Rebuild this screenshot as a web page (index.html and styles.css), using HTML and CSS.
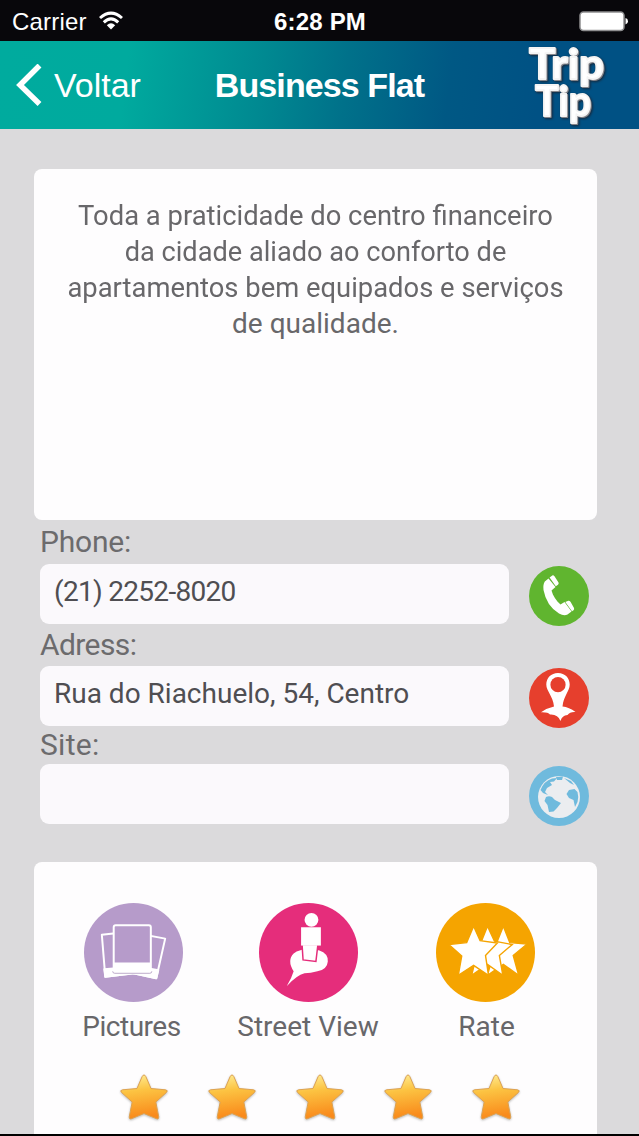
FILE: index.html
```html
<!DOCTYPE html>
<html lang="pt-BR">
<head>
<meta charset="utf-8">
<title>Business Flat</title>
<link rel="stylesheet" href="styles.css">
</head>
<body>
<svg class="defs" width="0" height="0" aria-hidden="true">
  <defs>
    <linearGradient id="gold" x1="0" y1="0" x2="0.15" y2="1"><stop offset="0" stop-color="#fff09a"/><stop offset="0.4" stop-color="#fcc342"/><stop offset="1" stop-color="#f98a1b"/></linearGradient>
    <symbol id="star" viewBox="0 0 48 48"><path d="M24 2Q25.200 2 25.900 3.700L31 15.500L45.500 16.800Q48.500 17.300 46.400 19.500L35.800 29L38.700 43.500Q39 47 36 45.500L24 40.500L12 45.500Q9 47 9.300 43.500L12.200 29L1.600 19.500Q-.5 17.300 2.500 16.800L17 15.500L22.100 3.700Q22.800 2 24 2Z" fill="url(#gold)" stroke="#dda252" stroke-width="1"/></symbol>
  </defs>
</svg>
<div class="screen">
  <div class="status">
    <div class="carrier"><span>Carrier</span>
      <svg width="24" height="19" viewBox="0 0 24 19"><g fill="none" stroke="#fff" stroke-width="3"><path d="M1 7Q12-2.800 23 7"/><path d="M4.800 11.300Q12 4.300 19.200 11.300"/></g><path d="M7.800 14.300Q12 10.200 16.200 14.300L12 18.500Z" fill="#fff"/></svg>
    </div>
    <div class="time">6:28 PM</div>
    <div class="battery"><svg width="49" height="21" viewBox="0 0 49 21"><rect x="1" y="1" width="44" height="18.500" rx="3.500" fill="#fff" stroke="#8e8e90" stroke-width="1.500"/><path d="M46.500 7Q49 7.500 49 10.300T46.500 13.600Z" fill="#fff"/></svg></div>
  </div>
  <header class="navbar">
    <a class="back"><svg width="26" height="42" viewBox="0 0 26 42"><path d="M23.500 1.500L4 21L23.500 40" fill="none" stroke="#fff" stroke-width="5.500"/></svg><span>Voltar</span></a>
    <h1>Business Flat</h1>
    <svg class="logo" width="82" height="86" viewBox="0 0 82 86"><text x="3" y="37" textLength="75" lengthAdjust="spacingAndGlyphs">Trip</text><text x="9" y="74" textLength="56" lengthAdjust="spacingAndGlyphs">Tip</text></svg>
  </header>
  <main>
    <section class="card about">
      <p><span class="line l1">Toda a praticidade do centro financeiro</span><span class="line l2">da cidade aliado ao conforto de</span><span class="line l3">apartamentos bem equipados e serviços</span><span class="line">de qualidade.</span></p>
    </section>
    <section class="contact">
      <div class="item phone"><label>Phone:</label>
        <div class="row"><div class="field">(21) 2252-8020</div>
          <svg class="round" viewBox="0 0 60 60"><circle cx="30" cy="30" r="30" fill="#60b52f"/><path d="M15.800 15.500L19.500 12.500L26.500 21L22.500 24.500C24 30 27 34.500 31.500 38.500L35.500 36L42.500 45.500L38.500 48.500Q35 50.500 30 47.500Q17.500 40 14.500 24Q13.800 18.500 15.800 15.500Z" fill="#fff"/><path d="M20.600 11.500L23.300 9.500Q24.500 9 25.500 10.300L29.500 16.500Q30 17.800 29 18.800L26.800 20.300ZM36.300 36L39.300 34.700Q40.500 34.500 41.500 35.700L45 42Q45.500 43.500 44.500 44.300L43 45.200Z" fill="#fff"/></svg></div></div>
      <div class="item address"><label>Adress:</label>
        <div class="row"><div class="field">Rua do Riachuelo, 54, Centro</div>
          <svg class="round" viewBox="0 0 60 60"><circle cx="30" cy="30" r="30" fill="#e63f2d"/><path d="M29 5C22 5 17.300 10 17.300 16.500C17.300 23 24 28 25 38.500Q18 40 12 44.300Q19 44 21 46.500Q29 46 31.500 53Q33 47.500 38.500 47Q41 43.500 46.500 44Q40 39 33.500 38.500C34.500 28 40.700 23 40.700 16.500C40.700 10 36 5 29 5Z" fill="#fff"/><circle cx="29" cy="16.700" r="7.600" fill="#e63f2d"/></svg></div></div>
      <div class="item site"><label>Site:</label>
        <div class="row"><div class="field"></div>
          <svg class="round" viewBox="0 0 60 60"><circle cx="30" cy="30" r="30" fill="#6fbadd"/><circle cx="30" cy="31" r="21" fill="#ebedf0"/><g fill="#6fbadd"><path d="M11.500 24Q15 15 23 12.500L28 12L25 15.500L21 16L23 19L18 22L16 26L19 29L14 27Z"/><path d="M27 11L34 10.500L33 14L28 14Z"/><path d="M17 31Q20 29.500 23 31L26 34L32 37L28 42L24.500 45.500L20 46L18.500 39L15.500 35Z"/><path d="M40 24L45.500 23L48.500 26Q50 31 48.500 36L46 41L44.500 34L40 32L37.500 28Z"/><path d="M35 12L42 15L45 19L41 17Z"/></g></svg></div></div>
    </section>
    <section class="card actions">
      <div class="tiles">
        <div class="tile pictures"><svg viewBox="0 0 100 100"><circle cx="50" cy="50" r="50" fill="#b69bca"/><g fill="#b69bca" stroke="#fff" stroke-width="2" stroke-linejoin="round"><path d="M18 32L55 28L59 70L21.500 74.500Z"/><path d="M20.500 67L57 64L59 70L21.500 74.500Z" fill="#fff"/><path d="M45 29L82 36L73 76L36 68Z"/><path d="M38 61L75 68L73 76L36 68Z" fill="#fff"/><rect x="30" y="22.500" width="37.500" height="47" rx="2"/></g><path d="M30 60H67.500V69.500H30Z" fill="#fff"/><path d="M29 69Q29 71 31 71H66.500Q68.500 71 68.500 69" fill="none" stroke="#ad96bd" stroke-width=".8"/></svg><span>Pictures</span></div>
        <div class="tile street"><svg viewBox="0 0 100 100"><circle cx="50" cy="50" r="50" fill="#e52d7b"/><path d="M38 49Q49 44 61 48Q70 51 69.500 59Q69 67 59 69Q52 71 46 71Q38 73 28 84Q33 76 35 69Q28 58 35 51Z" fill="#fff"/><path d="M43.500 42L44.500 57.500L57.500 59L59.500 42Z" fill="#fff" stroke="#e52d7b" stroke-width="1.500"/><path d="M42.500 24.500H62.500V43H42.500Z" fill="#fff"/><circle cx="53" cy="17" r="7" fill="#fff"/></svg><span>Street View</span></div>
        <div class="tile rate"><svg viewBox="0 0 100 100"><circle cx="50" cy="50" r="50" fill="#f5a400"/><g fill="#fff" stroke="#f5a400" stroke-width="1.400"><path d="M68 23.500L74.500 40L92 41.500L78 53L83.500 73L68 62L52 73L57.500 53L44 42L61 41Z"/><path d="M52 23.500L59 38.500L77 42L64 53L67.500 73L52 62L36 73L41 53L28 42L45 41Z"/><path d="M38 23.500L44.500 38L62 40.500L50 53L53 73L38 63L22.500 73L26 53.500L13 42L31 40Z"/></g></svg><span>Rate</span></div>
      </div>
      <div class="stars"><svg><use href="#star"/></svg><svg><use href="#star"/></svg><svg><use href="#star"/></svg><svg><use href="#star"/></svg><svg><use href="#star"/></svg></div>
    </section>
  </main>
</div>
</body>
</html>
```
FILE: styles.css
```css
* { box-sizing: border-box; }
body { margin: 0; background: #dbdadc; font-family: Roboto, sans-serif; }
.defs { display: block; height: 0; }
.screen { width: 639px; height: 1136px; overflow: hidden; display: flex; flex-direction: column; border-bottom: 2px solid #000; }
.status { height: 41px; flex: none; display: grid; grid-template-columns: 1fr 120px 1fr; align-items: center; background: #08070b; color: #fff; font: 24px/28px "Liberation Sans", sans-serif; padding: 2px 11px 0 12px; }
.carrier { display: flex; gap: 12px; align-items: center; }
.carrier span { letter-spacing: .2px; }
.carrier svg { margin-top: -3px; }
.time { font-weight: bold; text-align: center; letter-spacing: .2px; }
.battery { display: flex; justify-content: flex-end; }
.navbar { height: 88px; flex: none; display: grid; grid-template-columns: 160px 1fr 160px; align-items: center; color: #fff; font-family: "Liberation Sans", sans-serif; background: linear-gradient(97deg, #00ab9e 0%, #00aa9e 20%, #008991 41%, #00718a 54%, #005884 70%, #005184 84%, #005184 100%); }
.back { display: flex; align-items: center; padding-left: 16px; gap: 12px; font-size: 34px; line-height: 40px; }
h1 { margin: 0; text-align: center; font-size: 34px; line-height: 40px; letter-spacing: -.9px; }
.logo { justify-self: end; margin-right: 31px; overflow: visible; font: 900 42px Lato, sans-serif; fill: #fff; stroke: #f4f4f4; stroke-width: 1.8; stroke-linejoin: round; filter: drop-shadow(1px 1px 0 #85858a) drop-shadow(1px 1.5px 1px #16283c); }
main { flex: 1; padding: 40px 42px 0 34px; min-height: 0; display: flex; flex-direction: column; }
.card { background: #fefdfe; border-radius: 8px; }
.about { height: 351px; flex: none; padding-top: 29px; }
.about p { margin: 0; text-align: center; font-size: 28px; line-height: 36px; color: #68676a; white-space: nowrap; }
.line { display: block; }
.l1 { transform: scaleX(.978); }
.l2 { transform: scaleX(.97); }
.l3 { transform: scaleX(.978); }
.contact { height: 342px; flex: none; padding: 1px 8px 0 6px; }
.item { display: flex; flex-direction: column; }
.phone { height: 102px; }
.address { height: 99px; }
.item label { flex: none; height: 43px; line-height: 42px; font-size: 30px; color: #6c6b6d; }
.phone label { letter-spacing: -.2px; }
.address label { line-height: 44px; letter-spacing: -.6px; }
.site label { height: 42px; line-height: 45px; letter-spacing: .3px; }
.row { display: flex; flex: none; justify-content: space-between; align-items: center; height: 60px; }
.field { width: 469px; height: 60px; border-radius: 9px; background: #fbf9fc; color: #4f4e52; padding-left: 14px; font-size: 28px; line-height: 55px; white-space: nowrap; }
.phone .field { letter-spacing: -.7px; }
.round { width: 60px; height: 60px; margin-top: 4px; }
.actions { flex: 1; border-radius: 8px 8px 0 0; padding-top: 41px; }
.tiles { display: flex; padding-left: 12px; }
.tile { width: 175px; display: flex; flex-direction: column; align-items: center; font-size: 28px; line-height: 36px; color: #68676a; }
.pictures span { letter-spacing: -.5px; margin-right: 4px; }
.street { width: 174px; }
.rate { width: 180px; }
.tile svg { width: 99px; height: 99px; }
.tile span { margin-top: 7px; }
.rate span { padding-left: 3px; }
.stars { display: flex; gap: 40px; padding-left: 86px; margin-top: 28px; }
.stars svg { width: 48px; height: 48px; filter: drop-shadow(0 1px 1px #bbb); }
```
